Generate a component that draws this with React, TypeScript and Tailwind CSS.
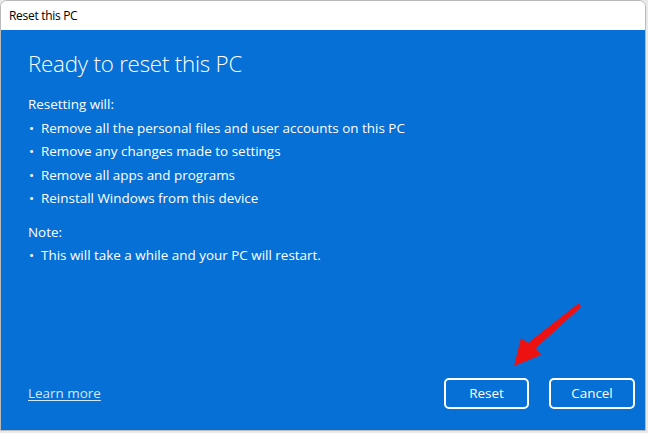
import React from "react";

export default function App() {
  const items = [
    "Remove all the personal files and user accounts on this PC",
    "Remove any changes made to settings",
    "Remove all apps and programs",
    "Reinstall Windows from this device",
  ];
  return (
    <div className="w-[648px] h-[433px] bg-[#e9e9e9] relative overflow-hidden" style={{ fontFamily: '"Open Sans", "Noto Sans", sans-serif' }}>
      <div className="w-[646px] h-[431px] flex flex-col rounded-t-[7px] border border-[#b9b9b9] overflow-hidden bg-white">
        <div className="h-[29px] shrink-0 bg-white flex items-center pl-[8px] text-[12px] text-black tracking-[-0.3px]">Reset this PC</div>
        <div className="flex-1 bg-[#0670d6] text-white flex flex-col pl-[27px] pr-[10px] relative">
          <div className="mt-[18px] text-[22.3px] font-light leading-[32px] tracking-[-0.2px]">Ready to reset this PC</div>
          <div className="mt-[13px] text-[13.45px] leading-[23.5px]">
            <div>Resetting will:</div>
            {items.map((t) => (
              <div key={t} className="flex">
                <span className="w-[13px] shrink-0 pl-[1px]">•</span>
                <span>{t}</span>
              </div>
            ))}
            <div className="mt-[10px]">Note:</div>
            <div className="flex">
              <span className="w-[13px] shrink-0 pl-[1px]">•</span>
              <span>This will take a while and your PC will restart.</span>
            </div>
          </div>
          <div className="mt-auto mb-[21px] flex items-center">
            <a className="text-[13.45px] text-[#d3e7fb] underline underline-offset-2">Learn more</a>
            <div className="ml-auto flex gap-[20px]">
              <button className="w-[85px] h-[31px] border-2 border-white rounded-[5px] text-[13.45px] text-white">Reset</button>
              <button className="w-[86px] h-[31px] border-2 border-white rounded-[5px] text-[13.45px] text-white">Cancel</button>
            </div>
          </div>
        </div>
      </div>
      <svg className="absolute left-0 top-0" width="648" height="433" viewBox="0 0 648 433">
        <polygon points="579,303 581,307 536,348 541,355 514,366 521,338 528,343" fill="#ee1111" />
      </svg>
    </div>
  );
}
